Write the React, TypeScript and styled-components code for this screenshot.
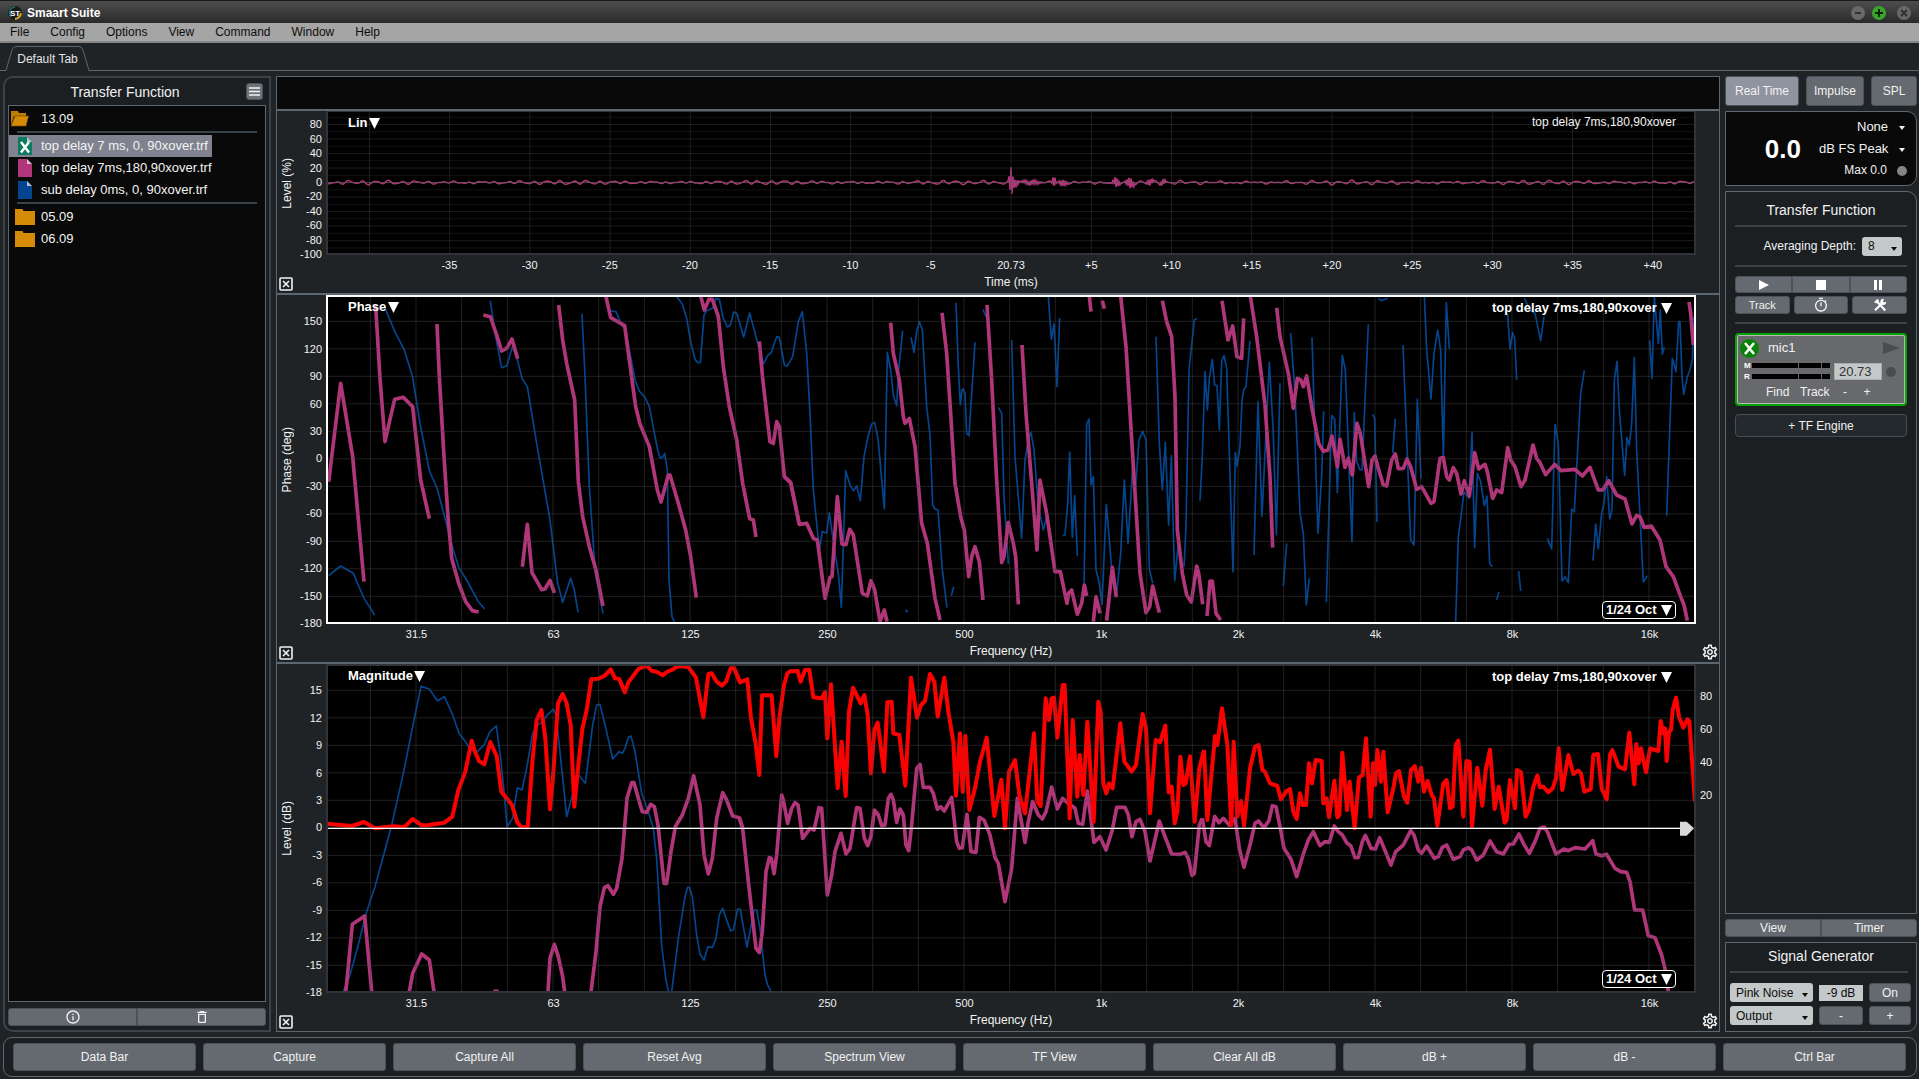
import React from "react";
import styled, { createGlobalStyle, css } from "styled-components";
import { MdInfoOutline, MdDeleteOutline, MdOutlineTimer, MdOutlineSettings } from "react-icons/md";

const color = {
  page: "#1f2326",
  panel: "#1b1f22",
  well: "#090909",
  line: "#5c676f",
  edge: "#3b4349",
  button: "#646a6f",
  buttonOn: "#9093a0",
  field: "#c3c8c8",
  text: "#f2f2f2",
  pink: "#b03679",
  blue: "#04458f",
  red: "#ff0000",
};

const GlobalStyle = createGlobalStyle`
  *, *::before, *::after { box-sizing: border-box; }
  body {
    margin: 0;
    background: ${color.page};
    color: ${color.text};
    font: 12px/16px "Liberation Sans", Arial, Helvetica, sans-serif;
  }
  button, input, select { font: inherit; color: inherit; margin: 0; }
  svg { display: block; }
`;

/* ---------- shell ---------- */

const Shell = styled.div`
  display: flex;
  flex-direction: column;
  height: 100vh;
  min-height: 700px;
  padding-bottom: 2px;
`;

const TitleBar = styled.header`
  display: flex;
  align-items: center;
  gap: 5px;
  height: 23px;
  padding: 1px 8px 0;
  border-top: 1px solid #17191b;
  background: linear-gradient(#4d4d4d, #2a2a2a);
`;

const AppName = styled.h1`
  flex: 1;
  margin: 0;
  color: #fff;
  font-size: 12px;
  line-height: 16px;
`;

const WindowButtons = styled.div`
  display: flex;
  gap: 7px;
`;

const WindowButton = styled.button<{ $live?: boolean; $apart?: boolean }>`
  display: grid;
  place-items: center;
  width: 14px;
  height: 14px;
  margin-left: ${(p) => (p.$apart ? "4px" : "0")};
  padding: 0;
  border: 0;
  border-radius: 50%;
  background: ${(p) => (p.$live ? "#3aa32c" : "#686868")};
  color: ${(p) => (p.$live ? "#0c2508" : "#303030")};
`;

const MenuBar = styled.nav`
  display: flex;
  gap: 1px;
  height: 20px;
  border-bottom: 2px solid #868686;
  background: #a5a5a5;
`;

const MenuButton = styled.button`
  padding: 1px 10px 0;
  border: 0;
  background: none;
  color: #0c0c0c;
  line-height: 17px;
`;

const TabStrip = styled.div`
  display: flex;
  align-items: flex-end;
  height: 28px;
  padding-left: 4px;
  border-bottom: 1px solid ${color.line};
`;

const TabButton = styled.button`
  display: grid;
  place-items: center;
  margin-bottom: -1px;
  padding: 0;
  border: 0;
  background: none;
  color: #e4e4e4;
  > * { grid-area: 1 / 1; }
`;

const Workspace = styled.main`
  flex: 1;
  display: grid;
  grid-template-columns: 268px minmax(0, 1fr) 192px;
  gap: 5px;
  min-height: 0;
  padding: 5px 2px 5px 3px;
`;

/* ---------- shared controls ---------- */

const PushButton = styled.button<{ $on?: boolean; $small?: boolean }>`
  display: flex;
  align-items: center;
  justify-content: center;
  min-width: 0;
  padding: 0;
  border: 1px solid #4c5358;
  border-radius: 3px;
  background: ${(p) => (p.$on ? color.buttonOn : color.button)};
  color: ${color.text};
  font-size: ${(p) => (p.$small ? "11px" : "12px")};
  line-height: 14px;
`;

const Segments = styled.div<{ $height: number }>`
  display: flex;
  height: ${(p) => p.$height}px;
  > * { flex: 1; }
  > *:not(:first-child) { border-top-left-radius: 0; border-bottom-left-radius: 0; }
  > *:not(:last-child) { border-top-right-radius: 0; border-bottom-right-radius: 0; }
`;

const PanelTitle = styled.h2`
  margin: 0;
  font-size: 14px;
  font-weight: 400;
  line-height: 16px;
  text-align: center;
`;

const Rule = styled.hr`
  width: 100%;
  height: 2px;
  margin: 0;
  border: 0;
  background: ${color.edge};
`;

const FieldSelectBox = styled.span`
  display: grid;
  align-items: center;
  > * { grid-area: 1 / 1; }
  > svg { justify-self: end; margin: 5px 5px 0 0; pointer-events: none; }
`;

const FieldSelectControl = styled.select`
  appearance: none;
  width: 100%;
  height: 19px;
  padding: 0 14px 0 6px;
  border: 0;
  border-radius: 3px;
  background: ${color.field};
  color: #0b0b0b;
  font-size: 12px;
`;

const Caret = () => (
  <svg width="6" height="4" viewBox="0 0 6 4" fill="currentColor" aria-hidden="true">
    <path d="M0 0H6L3 4Z" />
  </svg>
);

function FieldSelect({ id, label, value }: { id: string; label?: string; value: string }) {
  return (
    <FieldSelectBox>
      <FieldSelectControl id={id} aria-label={label} defaultValue={value}>
        <option>{value}</option>
      </FieldSelectControl>
      <svg width="6" height="4" viewBox="0 0 6 4" fill="#0b0b0b" aria-hidden="true">
        <path d="M0 0H6L3 4Z" />
      </svg>
    </FieldSelectBox>
  );
}

const BareSelect = styled.select`
  appearance: none;
  padding: 0;
  border: 0;
  background: none;
  color: inherit;
  font: inherit;
`;

/* ---------- data bar ---------- */

const DataPanel = styled.aside`
  display: flex;
  flex-direction: column;
  min-height: 0;
  padding: 5px 3px 4px;
  border: 2px solid ${color.edge};
  border-radius: 10px 0 0 10px;
  background: ${color.panel};
`;

const DataHead = styled.header`
  display: grid;
  grid-template-columns: 1fr 17px;
  align-items: start;
  height: 22px;
  padding-right: 3px;
  > h2 { padding: 1px 4px 0 0; }
`;

const ListButton = styled.button`
  display: grid;
  place-items: center;
  height: 17px;
  padding: 0;
  border: 1px solid #4c5358;
  border-radius: 3px;
  background: #6c7479;
`;

const FileWell = styled.div`
  flex: 1;
  min-height: 0;
  padding-top: 2px;
  border: 1px solid ${color.line};
  background: ${color.well};
`;

const FileList = styled.ul`
  margin: 0;
  padding: 0;
  list-style: none;
`;

const FileRow = styled.button<{ $selected?: boolean }>`
  display: flex;
  align-items: center;
  gap: 4px;
  height: 22px;
  padding: 0 4px;
  border: 0;
  background: ${(p) => (p.$selected ? "#80838f" : "none")};
  color: ${color.text};
  font-size: 13px;
  white-space: nowrap;
`;

const FileRule = styled(Rule)`
  width: auto;
  margin: 1px 8px 2px;
`;

const DataFoot = styled.footer`
  padding-top: 6px;
`;

type IconKind = "open" | "folder" | "file";

function FileIcon({ kind, fill = "#d48c06", crossed }: { kind: IconKind; fill?: string; crossed?: boolean }) {
  return (
    <svg width="24" height="18" viewBox="0 0 24 18" overflow="visible" aria-hidden="true">
      {kind === "open" && (
        <>
          <path d="M-2 15V1H5L6 3H13V6H1Z" fill="#c07d05" />
          <path d="M-2 16L2 6H15.500L13 16Z" fill="#d48c06" stroke="#7a5006" strokeWidth=".7" />
        </>
      )}
      {kind === "folder" && <path d="M2 1H9.500L10.500 3H22V17H2Z" fill={fill} />}
      {kind === "file" && (
        <>
          <path d="M5 0H14L19 5V18H5Z" fill={fill} />
          <path d="M14 0L19 5H14Z" fill="#ffffff" opacity=".65" />
        </>
      )}
      {crossed && <path d="M8 5L16 15.500M16 5L8 15.500" stroke="#fff" strokeWidth="2.400" />}
    </svg>
  );
}

/* ---------- charts ---------- */

const ChartColumn = styled.section`
  display: flex;
  flex-direction: column;
  min-width: 0;
  min-height: 0;
  border: 1px solid ${color.line};
`;

const Readout = styled.div`
  flex: none;
  height: 34px;
  border-bottom: 2px solid ${color.line};
  background: ${color.well};
`;

const ChartStack = styled.div`
  flex: 1;
  display: grid;
  grid-template-rows: minmax(0, 182fr) minmax(0, 367fr) minmax(0, 367fr);
  gap: 2px;
  min-height: 0;
  background: ${color.line};
`;

const ChartGrid = styled.figure`
  display: grid;
  grid-template-columns: 49px minmax(0, 1fr) 23px;
  grid-template-rows: minmax(0, 1fr) 38px;
  margin: 0;
  min-height: 0;
  background: ${color.page};
`;

const YSide = styled.div`
  display: grid;
  grid-template-columns: 20px 1fr;
`;

const YTitle = styled.span`
  place-self: center;
  writing-mode: vertical-rl;
  rotate: 180deg;
  white-space: nowrap;
`;

const YTicks = styled.div`
  display: grid;
  grid-auto-rows: minmax(0, 1fr);
  padding-right: 4px;
  text-align: right;
  font-size: 11px;
  line-height: 12px;
  > span { align-self: end; margin-bottom: -5px; }
`;

const CoherenceTicks = styled(YTicks)`
  grid-template-rows: repeat(10, 10%);
  padding: 0 0 0 4px;
  text-align: left;
`;

const Plot = styled.div`
  display: grid;
  min-width: 0;
  min-height: 0;
  > * { grid-area: 1 / 1; z-index: 1; }
  > svg { z-index: 0; width: 100%; height: 100%; min-height: 0; background: #000; }
`;

const Picker = styled.label<{ $at: "start" | "end" | "bottom" }>`
  display: flex;
  align-items: center;
  height: 18px;
  color: #fff;
  font-size: 13px;
  font-weight: 700;
  ${(p) => p.$at === "start" && css`place-self: start; gap: 1px; margin: 3px 0 0 22px;`}
  ${(p) => p.$at === "end" && css`place-self: start end; gap: 4px; margin: 4px 24px 0 0;`}
  ${(p) =>
    p.$at === "bottom" &&
    css`
      place-self: end;
      gap: 4px;
      margin: 0 20px 5px 0;
      padding: 0 3px;
      border: 1px solid #fff;
      border-radius: 4px;
      background: #000;
    `}
`;

const PlotCaption = styled.span`
  place-self: start end;
  margin: 3px 20px 0 0;
`;

const XAxis = styled.div`
  min-width: 0;
`;

const FreqTicks = styled.div`
  display: grid;
  grid-template-columns: repeat(10, 10%);
  margin: 0 -22px 0 22px;
  font-size: 11px;
  line-height: 20px;
  text-align: center;
`;

const TimeTicks = styled.div`
  display: grid;
  grid-template-columns: repeat(17, minmax(0, 1fr));
  padding: 0 3px;
  font-size: 11px;
  line-height: 20px;
  text-align: center;
`;

const XTitle = styled.figcaption`
  line-height: 14px;
  text-align: center;
`;

const CornerButton = styled.button<{ $end?: boolean }>`
  align-self: end;
  justify-self: ${(p) => (p.$end ? "end" : "start")};
  margin: ${(p) => (p.$end ? "0 0 1px" : "0 0 2px 2px")};
  padding: 0;
  border: 0;
  background: none;
  color: ${color.text};
`;

const BigCaret = () => (
  <svg width="11" height="11" viewBox="0 0 11 11" fill="#fff" aria-hidden="true">
    <path d="M0 0H11L5.500 11Z" />
  </svg>
);

function PlotPicker({ at, label, value }: { at: "start" | "end" | "bottom"; label: string; value: string }) {
  return (
    <Picker $at={at}>
      <BareSelect aria-label={label} defaultValue={value}>
        <option>{value}</option>
      </BareSelect>
      <BigCaret />
    </Picker>
  );
}

function CloseChart({ name }: { name: string }) {
  return (
    <CornerButton aria-label={`Close ${name}`}>
      <svg width="14" height="14" viewBox="0 0 14 14" fill="none" stroke="currentColor" aria-hidden="true">
        <rect x="1" y="1" width="12" height="12" rx="1" strokeWidth="1.600" />
        <path d="M4 4L10 10M10 4L4 10" strokeWidth="1.600" />
      </svg>
    </CornerButton>
  );
}

function ChartSettings({ name }: { name: string }) {
  return (
    <CornerButton $end aria-label={`${name} settings`}>
      <MdOutlineSettings size={18} />
    </CornerButton>
  );
}

/* Each trace is stored as bands of polylines; a band has its own origin. Three units to a pixel. */
type Band = { x: number; y: number; lines: string[] };

const phasePink: Band[] = [
  {
    x: -18,
    y: -15,
    lines: [
      "26,575 62,280 98,500 132,875",
      "165,45 168,65 180,265 195,455 210,388 224,328 250,322 278,350 302,570 328,686",
      "351,102 358,260 372,500 384,680 395,805 416,880 437,935 457,962 476,966",
      "490,75 511,80 530,135 545,183 560,175 576,147 593,206",
      "607,830 622,703 636,848 665,899 675,897 690,871 703,909",
      "716,45 728,150 740,220 764,330 775,575 788,680 808,770 828,840 849,948",
      "858,20 872,83 914,107 930,225 947,350 960,402 988,470 1012,600 1023,636 1045,555 1050,555 1075,640 1097,720 1112,800 1129,923",
      "1142,18 1153,60 1167,28 1177,28 1195,80 1210,230 1228,350 1250,450 1268,580 1289,686 1300,690 1308,741",
      "1318,154 1328,265 1340,370 1350,455 1360,460 1370,395 1378,410 1393,560 1412,578 1425,640 1438,703",
    ],
  },
  {
    x: 1362,
    y: -15,
    lines: [
      "13,560 32,578 45,640 58,703 80,700 100,745 112,750 135,925 150,862 156,860 172,620 186,762 198,764 209,718 220,735 247,910 262,918 273,872 284,900 300,995 313,960 321,995",
      "332,98 340,190 358,270 370,380 375,400 388,385 405,470 425,700 442,760 465,925 480,990",
      "486,68 500,190 512,370 525,580 543,685 553,720 566,860 575,800 585,770 598,815 609,930",
      "621,45 635,270 650,570 665,818 672,800 685,697 700,760 707,800 715,943",
      "726,165 738,370 755,580 771,780 780,570 800,670 825,845 841,845 861,940 866,910 875,900 892,973 905,940 913,885 920,918",
      "928,18 933,65",
      "967,32 973,56",
      "940,995 948,920 960,970",
      "980,992 997,832 1009,922",
      "1022,18 1038,170 1057,480 1080,850 1098,968 1109,950 1118,888 1138,968",
      "1147,32 1160,95 1175,140 1185,320 1192,720 1207,850 1220,915 1234,936 1250,828 1256,850 1268,943",
      "1281,978 1290,873 1297,873 1308,970 1322,990",
      "1326,32 1344,150 1358,108 1371,200 1385,205 1391,85",
    ],
  },
  {
    x: 2742,
    y: -15,
    lines: [
      "31,18 50,140 75,345 90,560 98,773",
      "110,53 120,140 145,250 160,355 172,265 182,270 190,290 200,258 215,350 236,460 250,484 264,480 276,438 292,530 300,448 315,532 325,505 337,555 351,400 361,430 386,590 396,510 405,498 415,535 430,585 440,588 455,510 466,492 475,536 490,535 501,507 512,530 530,598 545,590 573,640 582,635 600,505 610,503 620,560 628,570 640,533 650,550 663,612 673,572 688,618 704,488 716,537 735,523 742,545 758,625 770,600 785,608 803,473 812,510 825,530 843,590 855,570 879,465 890,505 900,518 917,554 944,523 963,542 1005,538 1027,558 1050,532 1060,560 1075,600 1088,600 1106,572 1130,615 1155,627 1176,702 1190,676 1200,680 1212,712 1234,708 1260,750 1278,830 1300,860 1322,920 1332,945 1342,992",
      "1347,36 1352,70 1360,165",
    ],
  },
];

const phaseBlue: Band[] = [
  {
    x: -18,
    y: -15,
    lines: [
      "26,857 62,828 100,850 132,925 164,975",
      "195,55 226,128 253,180 278,262 300,400 328,542 352,597 384,720 400,780 416,832 440,870 473,932 494,957",
      "511,32 525,130 545,233 561,227 577,170 590,200 606,265 622,290 650,460 690,690 713,880 728,937 752,865 763,900 774,967",
      "786,71 795,260 808,590 826,850 849,971",
      "870,63 888,65 905,107 915,115 930,190 945,270 958,303 975,322 988,350 1012,475 1020,503 1027,503 1034,490 1042,540 1047,870 1056,980 1063,996",
      "1069,18 1087,43 1100,85 1112,155 1125,208 1133,217 1141,218 1152,75 1160,62 1178,55 1188,25 1198,28 1209,83 1222,111 1231,106 1241,66 1250,70 1271,141 1289,69 1300,110 1316,170 1330,222 1343,197 1354,187 1370,140 1378,142 1393,225 1401,230",
    ],
  },
  {
    x: 1362,
    y: -15,
    lines: [
      "21,230 38,200 55,95 67,65 80,190 90,370 100,600 118,780 127,725 140,729 148,668 165,790 175,850 184,952 197,542 210,585 220,602 230,588 241,632 252,500 264,440 275,402 284,398 294,445 313,657 322,187 332,240 340,315 350,347 355,250 368,122",
      "393,142 402,187 410,125 418,95 427,120 440,350 450,435 458,645 465,657 474,660 487,840 501,953",
      "376,960 384,966",
      "514,917 521,890",
      "528,38 535,230 541,345 546,300 550,297 555,310 560,430 567,437 585,157",
      "609,58 618,80",
      "655,352 665,370 672,620 685,822",
      "695,150 705,500 725,745 735,510 745,450 753,427 762,480 775,650 790,720 800,680",
      "805,18 814,148 822,102 831,290 839,84",
      "848,737 855,735 863,640 869,486 877,742 884,617 892,797",
      "912,890 920,402 927,387 933,585 940,560 948,840 958,880 966,943 979,643 995,835",
      "1010,910 1022,790 1033,570 1044,760 1060,500",
      "1066,600 1077,450 1088,424 1098,450 1108,835 1118,880",
      "1128,140 1138,460 1147,600 1156,457 1166,706 1174,497 1184,873 1195,760",
      "1212,830 1218,710 1227,240 1243,90 1251,85",
      "1260,632 1267,500 1275,245 1282,360 1288,265 1297,208 1304,285 1311,287 1318,420 1325,215 1332,196 1340,235 1359,845 1366,487 1371,528 1380,470 1386,330 1392,297 1398,290 1410,152",
    ],
  },
  {
    x: 2742,
    y: -15,
    lines: [
      "42,795 54,335 66,679 88,217 100,430 109,735 120,280",
      "130,888 140,760",
      "152,129 165,310 180,670 190,730 199,945 208,865",
      "216,142 228,550 234,730 245,560 251,364",
      "259,937 275,377 284,387 292,608 307,196 316,240 336,755 343,367 350,515 360,540 366,540 385,103",
      "398,373 404,385 411,696",
      "415,25 424,32 442,25",
      "458,490 466,386",
      "489,165 512,750 522,765 532,327 543,565",
      "553,18 560,180 573,327 582,190 593,120 602,180 610,500 619,38 628,176",
      "647,995 655,740 663,680 672,605 687,625 696,427 704,773 712,550 722,575 733,647 741,618 749,820 757,830",
      "770,929 777,905",
      "803,72 810,177 818,128 824,145 830,270",
      "836,843 842,903",
      "853,25 870,60 885,70 902,152 912,80",
      "922,745 935,777 945,403 955,460 966,873 975,860 985,878 995,657 1003,666 1022,310 1033,241",
      "1059,812 1067,702 1075,777 1085,670 1092,640 1100,560 1109,687 1116,660 1123,270 1131,214 1138,360 1154,556 1161,443 1168,465 1175,400 1183,203 1190,480 1210,876 1222,857",
      "1229,152 1236,265 1243,18 1255,160 1261,60 1267,193 1273,172",
      "1280,677 1297,205 1308,245 1316,95 1320,95 1326,260 1331,313 1342,260 1350,240 1357,210 1362,80",
    ],
  },
];

const magnitudePink: Band[] = [
  {
    x: -168,
    y: -27,
    lines: [
      "227,1010 230,985 247,808 284,783 305,1010",
      "418,1010 428,955 455,897 478,915 492,1010",
      "670,1009 686,1009",
      "834,1010 840,910 853,868 865,905 878,965 884,1010",
      "963,1010 978,890 990,755 1003,698 1014,692 1030,718 1040,700 1056,610 1071,430 1085,383 1092,383 1105,430 1117,470 1130,472 1142,448 1153,455 1164,510 1182,685 1190,685 1203,590 1216,515 1237,480 1255,430 1271,362 1290,450 1302,600 1315,657 1327,610 1340,490 1358,413 1370,435 1388,483 1408,488 1418,520",
    ],
  },
  {
    x: 1212,
    y: -27,
    lines: [
      "28,488 38,520 55,680 78,880 88,893 97,830 108,650 118,608 124,610 132,656 140,600 155,420 160,435 173,505 185,460 195,443 204,450 218,550 240,520 252,525 267,458 275,460 292,720 305,660 315,590 333,535 348,597 360,580 380,458 390,460 403,550 413,572 423,545 433,465 445,480 455,512 465,510 475,430 483,418 490,435 500,502 510,462 520,480 528,570 536,587 545,510 560,340 570,328 580,397 600,397 610,415 622,463 632,455 643,468 665,427 680,560 688,580 697,578 711,478 723,590 738,592 748,487 762,495 780,540 795,608 805,625 825,740 845,640 862,430 885,562 895,500 908,440 925,480 937,492 948,470 965,396 982,462 998,430 1015,445 1035,460 1045,505 1058,508 1072,408 1080,470 1092,562 1110,545 1128,585 1147,525 1160,457 1185,457 1195,480 1206,545 1218,500 1230,493 1245,530 1260,618 1288,498 1305,545 1325,597 1350,598 1365,592 1375,610 1386,661 1393,655 1408,510 1417,490",
    ],
  },
  {
    x: 2622,
    y: -27,
    lines: [
      "7,490 18,560 28,572 44,484 57,503 70,490 88,510 105,490 118,580 132,637 150,570 165,505 175,498 192,518 207,497 217,452 228,455 243,530 252,580 273,613 290,665 310,597 325,555 340,530 360,572 375,560 388,562 403,513 415,530 427,540 440,563 452,572 465,608 475,607 487,560 496,541 513,580 526,582 539,548 573,630 587,590 610,570 632,527 642,540 655,585 664,595 680,573 703,610 715,605 727,577 740,570 760,613 780,605 790,585 805,578 815,585 830,615 850,600 870,558 890,590 910,597 927,568 940,567 957,537 970,565 988,595 1005,560 1020,520 1033,516 1042,530 1068,597 1092,582 1105,587 1125,578 1155,582 1178,557 1188,597 1205,602 1220,598 1245,640 1262,650 1280,652 1290,680 1304,765 1328,765 1345,842 1365,848 1385,900 1397,950 1405,1010",
    ],
  },
];

const magnitudeBlue: Band[] = [
  {
    x: -168,
    y: -27,
    lines: [
      "220,1010 240,960 262,880 290,770 315,695 345,585 365,510 400,355 430,205 453,94 478,102 502,137 523,125 545,172 567,235 590,265 600,285 622,290 643,268 660,230 679,213 692,310 705,440 711,515 728,490 742,398 756,405 770,340 788,235 800,212 814,203 830,182 850,163 858,180 872,310 890,485 902,440 922,355 946,385 968,210 980,150 990,148 1008,222 1028,312 1047,290 1057,295 1065,280 1075,247 1083,243 1095,290 1115,415 1135,470 1150,520 1160,610 1175,870 1187,970 1196,1012 1205,1010 1225,850 1245,725 1253,697 1258,697 1267,725 1280,840 1290,897 1302,915 1314,875 1327,878 1338,850 1348,780 1358,760 1372,800 1382,828 1390,825 1403,762 1411,763 1431,877",
    ],
  },
  { x: 1212, y: -27, lines: ["51,877 72,765 80,765 90,820 105,960 113,990 123,1010"] },
];

const coherence: Band[] = [
  {
    x: -168,
    y: -27,
    lines: [
      "172,506 245,513 282,501 315,520 370,514 403,516 428,492 455,511 475,510 523,503 547,485 565,405 586,350 605,257 615,290 627,318 643,328 661,261 680,303 694,410 726,450 742,502 753,515 773,517 788,310 800,195 814,165 826,250 840,463 848,380 864,145 878,117 890,145 902,210 913,455 925,330 937,222 950,165 964,72 985,71 1003,63 1022,43 1035,70 1048,72 1064,112 1075,82 1105,42 1130,32 1145,47 1160,50 1178,61 1192,50 1205,45 1225,33 1255,36 1278,68 1300,187 1315,57 1325,55 1340,80 1356,92 1368,80 1382,40 1392,40 1410,82",
    ],
  },
  {
    x: 1212,
    y: -27,
    lines: [
      "12,38 30,82 52,73 63,190 77,265 88,360 96,121 125,121 139,303 148,190 162,90 172,55 180,49 203,48 212,80 225,45 238,44 250,127 275,130 285,112 292,250 303,88 323,400 335,260 347,423 357,170 369,98 392,145 403,120 413,180 423,355 433,225 443,203 462,350 472,142 485,140 490,235 508,240 526,392 543,68 561,188 573,150 585,138 600,57 613,80 623,185 643,68 655,170 670,260 678,422 690,235 698,410 706,243 718,465 735,400 750,320 770,248 793,483 814,374 825,520 837,350 855,315 868,420 885,475 912,235 922,440 932,453 947,130 957,195 965,130 972,128 982,248 998,90 1004,90 1019,490 1028,195 1042,425 1049,300 1060,420 1072,200 1091,500 1105,140 1112,170 1120,385 1129,415 1137,385 1148,400 1171,205 1183,320 1205,350 1218,330 1238,177 1248,220 1260,475 1277,255 1290,262 1306,212 1316,412 1325,395 1334,505 1342,470 1351,305 1360,390 1367,385 1380,304 1394,500 1408,340 1422,285",
    ],
  },
  {
    x: 2622,
    y: -27,
    lines: [
      "12,285 22,495 45,243 52,270 66,160 82,270 94,510 101,260 112,485 123,438 132,512 150,340 165,275 176,270 187,345 195,350 210,385 232,393 243,433 258,410 270,402 280,470 290,492 300,415 308,450 318,450 327,325 336,385 347,315 365,318 370,445 380,430 387,487 403,377 412,487 418,480 427,293 441,465 449,380 464,520 477,367 488,360 498,250 512,485 519,325 525,390 532,285 543,380 550,290 563,472 580,400 588,355 597,348 612,425 622,443 633,345 644,333 655,380 663,338 672,410 683,378 695,420 702,430 712,512 730,385 740,375 750,460 758,455 767,270 775,257 790,485 799,318 809,320 816,517 832,338 847,452 857,345 870,284 884,462 896,395 914,503 920,495 930,375 945,460 951,345 963,352 977,485 987,465 1000,395 1012,362 1020,397 1030,395 1045,412 1058,400 1068,370 1076,280 1087,405 1105,300 1120,357 1135,347 1143,355 1153,410 1172,403 1180,300 1194,297 1205,400 1220,433 1230,300 1237,285 1256,335 1275,343 1288,233 1303,388 1309,267 1316,325 1323,280 1338,352 1350,280 1375,288 1382,198 1390,235 1395,220 1400,318 1407,230 1413,225 1418,165 1428,128 1437,185 1450,218 1462,193 1468,198 1477,330 1485,440",
    ],
  },
];

function Trace({ bands, stroke, width }: { bands: Band[]; stroke: string; width: number }) {
  return (
    <g fill="none" stroke={stroke} strokeWidth={width} strokeLinejoin="round">
      {bands.map((band) => (
        <g key={band.x} transform={`translate(${band.x} ${band.y})`}>
          {band.lines.map((points) => (
            <polyline key={points} points={points} />
          ))}
        </g>
      ))}
    </g>
  );
}

const range = (n: number) => Array.from({ length: n }, (_, i) => i);

function FrequencyPlot({ children, frame, top }: { children: React.ReactNode; frame: string; top?: React.ReactNode }) {
  return (
    <svg viewBox="0 0 4110 987" preserveAspectRatio="none" aria-hidden="true">
      {children}
      <g stroke="#48484c" strokeOpacity=".45" strokeWidth="3">
        {range(30).map((i) => (
          <line key={i} x1={133 + i * 137} x2={133 + i * 137} y1="0" y2="987" />
        ))}
        {range(11).map((i) => (
          <line key={i} y1={79 + i * 82.5} y2={79 + i * 82.5} x1="0" x2="4110" />
        ))}
      </g>
      <rect x="3" y="3" width="4104" height="981" fill="none" stroke={frame} strokeWidth="6" />
      {top}
    </svg>
  );
}

const freqLabels = ["31.5", "63", "125", "250", "500", "1k", "2k", "4k", "8k", "16k"];
const timeLabels = ["", "-35", "-30", "-25", "-20", "-15", "-10", "-5", "20.73", "+5", "+10", "+15", "+20", "+25", "+30", "+35", "+40"];

function ticks(from: number, step: number, count: number) {
  return range(count).map((i) => <span key={i}>{from - i * step}</span>);
}

/* Low-level ripple around zero, with the main arrival and its early reflections. */
const bursts = [
  { at: 685, up: 14, down: 13, reach: 2 },
  { at: 689, up: 3, down: 6, reach: 4 },
  { at: 705, up: 3, down: 2, reach: 12 },
  { at: 728, up: 8, down: 3, reach: 2 },
  { at: 737, up: 3, down: 4, reach: 5 },
  { at: 790, up: 4, down: 6, reach: 4 },
  { at: 804, up: 5, down: 6, reach: 5 },
  { at: 824, up: 4, down: 3, reach: 4 },
  { at: 837, up: 4, down: 2, reach: 3 },
];

const impulse = range(1368)
  .map((i) => {
    const x = i + 1;
    const swell = Math.sin(x / 2.1) * (1 + 0.5 * Math.sin(x / 31)) + Math.sin(x / 1.3 + 1) * 0.5 + Math.sin(x / 5.3) * 0.5;
    const burst = bursts.reduce((sum, b) => {
      const d = Math.abs(x - b.at);
      if (d > b.reach) return sum;
      return sum + (x % 2 === 0 ? b.down : -b.up) * (1 - d / (b.reach + 1));
    }, 0);
    return `${x},${(71.5 + swell + burst).toFixed(1)}`;
  })
  .join(" ");

function ImpulseChart() {
  return (
    <ChartGrid>
      <YSide>
        <YTitle>Level (%)</YTitle>
        <YTicks>{ticks(80, 20, 10)}</YTicks>
      </YSide>
      <Plot>
        <svg viewBox="0 0 1370 144" preserveAspectRatio="none" aria-hidden="true">
          <polyline points={impulse} fill="none" stroke={color.pink} strokeWidth="1.500" />
          <g stroke="#48484c" strokeOpacity=".4">
            {range(17).map((i) => (
              <line key={i} x1={43.5 + i * 80.2} x2={43.5 + i * 80.2} y1="0" y2="144" />
            ))}
            {range(19).map((i) => (
              <line key={i} y1={6.2 + i * 7.26} y2={6.2 + i * 7.26} x1="0" x2="1370" strokeOpacity={i % 2 ? 0.4 : 0.25} />
            ))}
          </g>
          <line x1="0" x2="1370" y1="71.5" y2="71.5" stroke="#6d5a63" strokeOpacity=".6" />
          <rect x="1" y="0" width="1368" height="143" fill="none" stroke="#303438" strokeWidth="2" />
        </svg>
        <PlotPicker at="start" label="Impulse response scale" value="Lin" />
        <PlotCaption>top delay 7ms,180,90xover</PlotCaption>
      </Plot>
      <span />
      <CloseChart name="impulse response" />
      <XAxis>
        <TimeTicks>
          {timeLabels.map((label) => (
            <span key={label}>{label}</span>
          ))}
        </TimeTicks>
        <XTitle>Time (ms)</XTitle>
      </XAxis>
    </ChartGrid>
  );
}

type FrequencyChartProps = {
  name: string;
  unit: string;
  labels: React.ReactNode;
  side?: React.ReactNode;
  children: React.ReactNode;
};

function FrequencyChart({ name, unit, labels, side, children }: FrequencyChartProps) {
  return (
    <ChartGrid>
      <YSide>
        <YTitle>{unit}</YTitle>
        <YTicks>{labels}</YTicks>
      </YSide>
      <Plot>
        {children}
        <PlotPicker at="start" label="Plot type" value={name} />
        <PlotPicker at="end" label={`${name} front trace`} value="top delay 7ms,180,90xover" />
        <PlotPicker at="bottom" label={`${name} smoothing`} value="1/24 Oct" />
      </Plot>
      {side ?? <span />}
      <CloseChart name={name} />
      <XAxis>
        <FreqTicks>
          {freqLabels.map((label) => (
            <span key={label}>{label}</span>
          ))}
        </FreqTicks>
        <XTitle>Frequency (Hz)</XTitle>
      </XAxis>
      <ChartSettings name={name} />
    </ChartGrid>
  );
}

/* ---------- control bar ---------- */

const ControlBar = styled.aside`
  display: flex;
  flex-direction: column;
  gap: 5px;
  min-height: 0;
`;

const ModeTabs = styled.div`
  display: grid;
  grid-template-columns: 74px 58px 46px;
  gap: 7px;
  height: 30px;
`;

const Meter = styled.section`
  display: grid;
  grid-template-columns: 1fr auto;
  align-items: center;
  gap: 18px;
  height: 75px;
  padding: 0 9px;
  border: 1px solid ${color.line};
  border-radius: 0 10px 10px 0;
  background: ${color.well};
`;

const Level = styled.output`
  color: #fff;
  font-size: 26px;
  font-weight: 700;
  line-height: 30px;
  text-align: right;
`;

const MeterOptions = styled.div`
  display: grid;
  justify-items: end;
  grid-auto-rows: 22px;
`;

const MeterRow = styled.div<{ $minor?: boolean }>`
  display: flex;
  align-items: center;
  gap: 10px;
  font-size: ${(p) => (p.$minor ? "12px" : "13px")};
  line-height: 15px;
  > svg { margin: 3px 2px 0 0; }
`;

const Dot = styled.span<{ $tone: string }>`
  width: 10px;
  height: 10px;
  border-radius: 50%;
  background: ${(p) => p.$tone};
`;

const EnginePanel = styled.section`
  flex: 1;
  display: flex;
  flex-direction: column;
  min-height: 0;
  padding: 10px 9px;
  border: 1px solid ${color.line};
  border-radius: 0 10px 0 0;
  background: ${color.panel};
  > h2 + hr { margin-top: 7px; }
`;

const DepthRow = styled.div`
  display: grid;
  grid-template-columns: 1fr 40px;
  align-items: center;
  gap: 6px;
  height: 38px;
  padding-right: 5px;
  text-align: right;
`;

const Transport = styled.div`
  display: flex;
  flex-direction: column;
  gap: 3px;
  padding: 9px 0;
`;

const ToolRow = styled.div`
  display: grid;
  grid-template-columns: repeat(3, 1fr);
  gap: 4px;
  height: 17px;
`;

const EngineCard = styled.section`
  display: flex;
  flex-direction: column;
  justify-content: space-between;
  height: 73px;
  margin: 9px 0 8px;
  padding: 3px 4px 5px 3px;
  border: 2px solid #07a007;
  border-radius: 4px;
  outline: 1px solid #b9b9b9;
  outline-offset: -3px;
  background: #67696c;
`;

const EngineHead = styled.div`
  display: flex;
  align-items: center;
  gap: 9px;
  height: 20px;
  padding-right: 1px;
  font-size: 13px;
  > span { flex: 1; }
`;

const EngineLevels = styled.div`
  display: grid;
  grid-template-columns: 86px 48px 10px;
  align-items: center;
  justify-content: end;
  gap: 4px;
  padding-right: 5px;
`;

const LevelBars = styled.div`
  display: grid;
  grid-template-columns: 7px 46px 22px 8px;
  gap: 5px 1px;
  color: #fff;
  font-size: 8px;
  font-weight: 700;
  line-height: 6px;
  > i { height: 5px; background: #000; }
`;

const DelayField = styled.input`
  width: 100%;
  height: 17px;
  padding: 0 0 0 4px;
  border: 1px solid #a9adad;
  background: ${color.field};
  color: #333;
  font-size: 13px;
`;

const EngineActions = styled.div`
  display: grid;
  grid-template-columns: 22px 28px 10px 10px;
  justify-content: end;
  gap: 12px;
  padding-right: 29px;
`;

const TextButton = styled.button`
  padding: 0;
  border: 0;
  background: none;
  line-height: 14px;
`;

const AddEngine = styled.button`
  height: 23px;
  padding: 0;
  border: 1px solid #474e54;
  border-radius: 4px;
  background: #24292d;
`;

const Generator = styled.section`
  display: flex;
  flex-direction: column;
  height: 90px;
  padding: 4px 4px 0;
  border: 1px solid ${color.line};
  border-radius: 0 0 10px 0;
  background: ${color.panel};
  > h2 { padding-top: 1px; }
  > hr { width: auto; margin: 7px 4px 10px 0; }
`;

const GeneratorGrid = styled.div`
  display: grid;
  grid-template-columns: 83px 44px 42px;
  grid-auto-rows: 19px;
  align-items: stretch;
  gap: 4px 6px;
`;

const GainField = styled.input`
  align-self: center;
  width: 100%;
  height: 16px;
  padding: 0;
  border: 0;
  background: ${color.field};
  color: #0b0b0b;
  text-align: center;
`;

const CommandBar = styled.footer`
  flex: none;
  display: grid;
  grid-auto-flow: column;
  grid-auto-columns: minmax(0, 1fr);
  gap: 7px;
  height: 40px;
  margin: 0 2px 0 3px;
  padding: 5px 10px 5px 9px;
  border: 1px solid ${color.line};
  border-radius: 9px;
  background: ${color.panel};
`;

const ToolsIcon = () => (
  <svg width="14" height="14" viewBox="0 0 14 14" fill="none" stroke="#fff" aria-hidden="true">
    <path d="M1 4.200L4.200 1L6 2.200L5.500 5L3.200 5.200Z" fill="#fff" stroke="none" />
    <path d="M4 3.500L12.300 12.500" strokeWidth="2" />
    <path d="M2 12.300L9.500 5" strokeWidth="2.200" />
    <path d="M11 1A3 3 0 1 0 13.200 3.800L11.200 4.600L10 3.500Z" fill="#fff" stroke="none" />
  </svg>
);

const menus = ["File", "Config", "Options", "View", "Command", "Window", "Help"];
const commands = ["Data Bar", "Capture", "Capture All", "Reset Avg", "Spectrum View", "TF View", "Clear All dB", "dB +", "dB -", "Ctrl Bar"];

export default function App() {
  return (
    <>
      <GlobalStyle />
      <Shell>
        <TitleBar>
          <svg width="14" height="14" viewBox="0 0 14 14" aria-hidden="true">
            <circle cx="7" cy="7" r="7" fill="#17191a" />
            <path d="M3 11A6 6 0 0 1 7 1" fill="none" stroke="#1f6f62" strokeWidth="1.500" />
            <path d="M12.800 7A6 6 0 0 1 7 13" fill="none" stroke="#e0ac1c" strokeWidth="2" />
            <text x="7" y="10" fontSize="8" fontWeight="700" textAnchor="middle" fill="#fff">ST</text>
          </svg>
          <AppName>Smaart Suite</AppName>
          <WindowButtons>
            <WindowButton aria-label="Minimize">
              <svg width="8" height="8" viewBox="0 0 8 8" stroke="currentColor" strokeWidth="2"><path d="M1 4H7" /></svg>
            </WindowButton>
            <WindowButton aria-label="Maximize" $live>
              <svg width="8" height="8" viewBox="0 0 8 8" stroke="currentColor" strokeWidth="2"><path d="M0 4H8M4 0V8" /></svg>
            </WindowButton>
            <WindowButton aria-label="Close" $apart>
              <svg width="8" height="8" viewBox="0 0 8 8" stroke="currentColor" strokeWidth="2"><path d="M1 1L7 7M7 1L1 7" /></svg>
            </WindowButton>
          </WindowButtons>
        </TitleBar>

        <MenuBar>
          {menus.map((name) => (
            <MenuButton key={name}>{name}</MenuButton>
          ))}
        </MenuBar>

        <TabStrip>
          <TabButton>
            <svg width="87" height="25" viewBox="0 0 87 25" aria-hidden="true">
              <path d="M0 24.500H2L8 4Q9 .500 12 .500H75Q78 .500 79 4L85 24.500H87" fill={color.page} stroke={color.line} />
              <path d="M2.500 24.500H84.500" stroke={color.page} />
            </svg>
            <span>Default Tab</span>
          </TabButton>
        </TabStrip>

        <Workspace>
          <DataPanel>
            <DataHead>
              <PanelTitle>Transfer Function</PanelTitle>
              <ListButton aria-label="Data options">
                <svg width="11" height="9" viewBox="0 0 11 9" stroke="#f2f2f2" strokeWidth="1.500" aria-hidden="true">
                  <path d="M0 1H11M0 4.500H11M0 8H11" />
                </svg>
              </ListButton>
            </DataHead>
            <FileWell>
              <FileList>
                <li><FileRow><FileIcon kind="open" />13.09</FileRow></li>
              </FileList>
              <FileRule />
              <FileList>
                <li><FileRow $selected><FileIcon kind="file" fill="#0d7a62" crossed />top delay 7 ms, 0, 90xover.trf</FileRow></li>
                <li><FileRow><FileIcon kind="file" fill={color.pink} />top delay 7ms,180,90xover.trf</FileRow></li>
                <li><FileRow><FileIcon kind="file" fill={color.blue} />sub delay 0ms, 0, 90xover.trf</FileRow></li>
              </FileList>
              <FileRule />
              <FileList>
                <li><FileRow><FileIcon kind="folder" />05.09</FileRow></li>
                <li><FileRow><FileIcon kind="folder" />06.09</FileRow></li>
              </FileList>
            </FileWell>
            <DataFoot>
              <Segments $height={18}>
                <PushButton aria-label="Info"><MdInfoOutline size={16} /></PushButton>
                <PushButton aria-label="Delete"><MdDeleteOutline size={16} /></PushButton>
              </Segments>
            </DataFoot>
          </DataPanel>

          <ChartColumn>
            <Readout />
            <ChartStack>
              <ImpulseChart />
              <FrequencyChart name="Phase" unit="Phase (deg)" labels={ticks(150, 30, 12)}>
                <FrequencyPlot frame="#fff">
                  <Trace bands={phaseBlue} stroke={color.blue} width={5} />
                  <Trace bands={phasePink} stroke={color.pink} width={11} />
                </FrequencyPlot>
              </FrequencyChart>
              <FrequencyChart
                name="Magnitude"
                unit="Level (dB)"
                labels={ticks(15, 3, 12)}
                side={<CoherenceTicks>{ticks(80, 20, 4)}</CoherenceTicks>}
              >
                <FrequencyPlot
                  frame="#303438"
                  top={
                    <>
                      <path d="M6 493H4062" stroke="#fff" strokeWidth="4" />
                      <path d="M4062 473H4082L4104 493L4082 515H4062Z" fill="#d9d9d9" />
                    </>
                  }
                >
                  <Trace bands={magnitudeBlue} stroke={color.blue} width={5} />
                  <Trace bands={magnitudePink} stroke={color.pink} width={11} />
                  <Trace bands={coherence} stroke={color.red} width={12} />
                </FrequencyPlot>
              </FrequencyChart>
            </ChartStack>
          </ChartColumn>

          <ControlBar>
            <ModeTabs>
              <PushButton $on>Real Time</PushButton>
              <PushButton>Impulse</PushButton>
              <PushButton>SPL</PushButton>
            </ModeTabs>

            <Meter>
              <Level>0.0</Level>
              <MeterOptions>
                <MeterRow>
                  <BareSelect aria-label="Meter input" defaultValue="None"><option>None</option></BareSelect>
                  <Caret />
                </MeterRow>
                <MeterRow>
                  <BareSelect aria-label="Meter scale" defaultValue="dB FS Peak"><option>dB FS Peak</option></BareSelect>
                  <Caret />
                </MeterRow>
                <MeterRow $minor>
                  Max 0.0
                  <Dot $tone="#858585" />
                </MeterRow>
              </MeterOptions>
            </Meter>

            <EnginePanel>
              <PanelTitle>Transfer Function</PanelTitle>
              <Rule />
              <DepthRow>
                <label htmlFor="depth">Averaging Depth:</label>
                <FieldSelect id="depth" value="8" />
              </DepthRow>
              <Rule />
              <Transport>
                <Segments $height={17}>
                  <PushButton aria-label="Play">
                    <svg width="10" height="10" viewBox="0 0 10 10" fill="#fff"><path d="M0 0L10 5L0 10Z" /></svg>
                  </PushButton>
                  <PushButton aria-label="Stop">
                    <svg width="10" height="10" viewBox="0 0 10 10" fill="#fff"><path d="M0 0H10V10H0Z" /></svg>
                  </PushButton>
                  <PushButton aria-label="Pause">
                    <svg width="8" height="10" viewBox="0 0 8 10" fill="#fff"><path d="M0 0H3V10H0ZM5 0H8V10H5Z" /></svg>
                  </PushButton>
                </Segments>
                <ToolRow>
                  <PushButton $small>Track</PushButton>
                  <PushButton aria-label="Find delay"><MdOutlineTimer size={16} /></PushButton>
                  <PushButton aria-label="Tools"><ToolsIcon /></PushButton>
                </ToolRow>
              </Transport>
              <Rule />
              <EngineCard>
                <EngineHead>
                  <svg width="19" height="19" viewBox="0 0 19 19" aria-hidden="true">
                    <circle cx="9.500" cy="9.500" r="9.500" fill="#078207" />
                    <path d="M5 4L14 15M14 4L5 15" stroke="#fff" strokeWidth="2.600" />
                  </svg>
                  <span>mic1</span>
                  <svg width="17" height="12" viewBox="0 0 17 12" fill="#4b4c4e" aria-hidden="true"><path d="M0 0L17 6L0 12Z" /></svg>
                </EngineHead>
                <EngineLevels>
                  <LevelBars>
                    <span>M</span><i /><i /><i />
                    <span>R</span><i /><i /><i />
                  </LevelBars>
                  <DelayField aria-label="Delay (ms)" defaultValue="20.73" />
                  <Dot $tone="#4b4c4e" />
                </EngineLevels>
                <EngineActions>
                  <TextButton>Find</TextButton>
                  <TextButton>Track</TextButton>
                  <TextButton>-</TextButton>
                  <TextButton>+</TextButton>
                </EngineActions>
              </EngineCard>
              <AddEngine>+ TF Engine</AddEngine>
            </EnginePanel>

            <Segments $height={18}>
              <PushButton>View</PushButton>
              <PushButton>Timer</PushButton>
            </Segments>

            <Generator>
              <PanelTitle>Signal Generator</PanelTitle>
              <Rule />
              <GeneratorGrid>
                <FieldSelect id="signal" label="Signal" value="Pink Noise" />
                <GainField aria-label="Gain" defaultValue="-9 dB" />
                <PushButton>On</PushButton>
                <FieldSelect id="output" label="Output" value="Output" />
                <PushButton>-</PushButton>
                <PushButton>+</PushButton>
              </GeneratorGrid>
            </Generator>
          </ControlBar>
        </Workspace>

        <CommandBar>
          {commands.map((name) => (
            <PushButton key={name}>{name}</PushButton>
          ))}
        </CommandBar>
      </Shell>
    </>
  );
}
